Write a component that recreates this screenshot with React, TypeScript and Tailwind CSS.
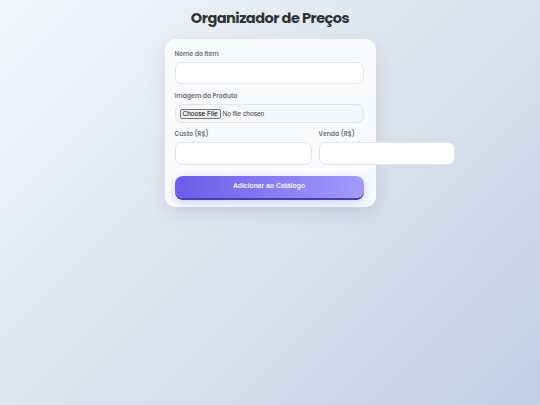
export default function App() {
  return (
    <div className="min-h-[405px] w-full bg-[linear-gradient(135deg,#f5f7fa_0%,#c3cfe2_100%)] font-['Poppins','Inter',sans-serif] pt-[9px] overflow-hidden">
      <h1 className="text-center text-[14.5px] leading-[18px] font-bold text-[#2d3436] tracking-[-0.5px]">
        Organizador de Preços
      </h1>
      <div className="mx-auto mt-[12px] w-[211px] rounded-[10px] bg-[#f9fafc] pt-[10px] pb-[9px] pl-[10px] pr-[12px] shadow-[0_6px_18px_rgba(100,116,160,0.18)]">
        <label className="block text-[6.2px] leading-[10px] font-semibold text-[#707479]">Nome do Item</label>
        <div className="mt-[3px] h-[22px] w-[189px] rounded-[7px] border border-[#e2e6ea] bg-white" />

        <label className="mt-[7px] block text-[6.2px] leading-[10px] font-semibold text-[#707479]">Imagem do Produto</label>
        <div className="mt-[3px] flex h-[19px] w-[189px] items-center rounded-[7px] border border-[#e2e6ea] bg-[#f5f6f8] pl-[4px] font-['Liberation_Sans',sans-serif] text-[6.6px] text-[#333]">
          <span className="flex h-[10px] w-[41px] items-center justify-center rounded-[2px] border border-[#767676] bg-[#efefef] text-black">
            Choose File
          </span>
          <span className="ml-[2px] text-[#444]">No file chosen</span>
        </div>

        <div className="mt-[6px] flex gap-[7px]">
          <div className="shrink-0">
            <label className="block text-[6.2px] leading-[10px] font-semibold text-[#707479]">Custo (R$)</label>
            <div className="mt-[3px] h-[23px] w-[137px] rounded-[7px] border border-[#e2e6ea] bg-white" />
          </div>
          <div className="shrink-0">
            <label className="block text-[6.2px] leading-[10px] font-semibold text-[#707479]">Venda (R$)</label>
            <div className="mt-[3px] h-[23px] w-[136px] rounded-[7px] border border-[#e2e6ea] bg-white" />
          </div>
        </div>

        <button className="mt-[11px] flex h-[22px] w-[189px] items-center justify-center rounded-[8px] bg-[linear-gradient(90deg,#6c5ce7,#a29bfe)] pb-[2px] font-['Liberation_Sans',sans-serif] text-[6.8px] font-bold text-[#f3f1ff] shadow-[0_2px_0_#4a3db5,0_4px_10px_rgba(108,92,231,0.3)]">
          Adicionar ao Catálogo
        </button>
      </div>
    </div>
  );
}
